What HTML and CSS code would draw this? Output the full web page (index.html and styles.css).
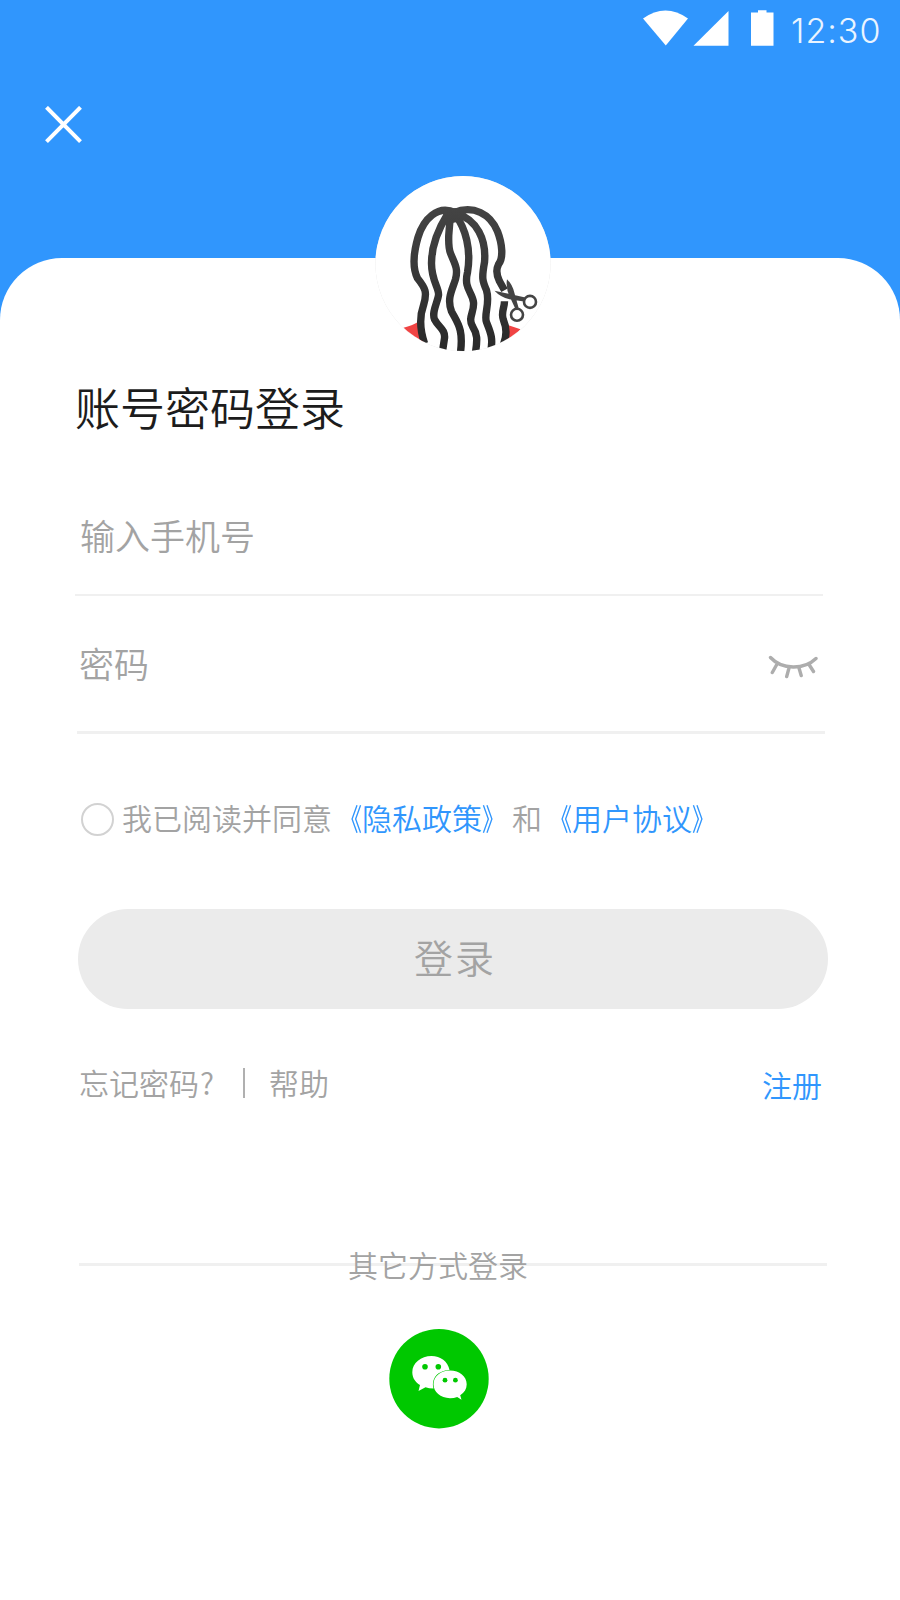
FILE: index.html
```
<!DOCTYPE html>
<html lang="zh-CN">
<head>
<meta charset="utf-8">
<title>账号密码登录</title>
<link rel="stylesheet" href="styles.css">
</head>
<body>
<main class="screen">
  <header class="header">
    <div class="status">
      <svg class="status-icons" width="134" height="36" viewBox="0 0 134 36">
        <path fill="#fff" d="M0 8.500Q22.500-7.500 45 8.500L22.800 35.500Z"/>
        <path fill="#fff" d="M85.500 1V35.700H50.500Z"/>
        <path fill="#fff" d="M108 2.500h7V0.300h8.500V2.500h7V35.700H108Z"/>
      </svg>
      <span class="time">12:30</span>
    </div>
    <svg class="close" width="38" height="38" viewBox="0 0 38 38">
      <path d="M1.500 1.300 35.500 35.700M35.500 1.300 1.500 35.700" stroke="#fff" stroke-width="4"/>
    </svg>
  </header>

  <section class="card">
    <svg class="avatar" width="176" height="176" viewBox="374.500 175.700 176 176">
      <defs>
        <clipPath id="round"><circle cx="462.500" cy="263.400" r="87.400"/></clipPath>
        <linearGradient id="hair" gradientUnits="userSpaceOnUse" x1="0" y1="206" x2="0" y2="350"><stop offset="0" stop-color="#444"/><stop offset="1" stop-color="#292929"/></linearGradient>
      </defs>
      <circle cx="462.500" cy="263.400" r="87.600" fill="#fff"/>
      <g clip-path="url(#round)">
        <path fill="#f04444" d="M403 327.500Q412 325 417 322L424 345H410ZM508 325 520 329 505 345Z"/>
        <g fill="none" stroke="url(#hair)" stroke-width="7.400" stroke-linejoin="round">
          <path d="M455 212.500C437 204 423 219 417.500 237C412 256 413 270 417 278C425 288 427 292 423 305C419 316 419 328 424 343"/>
          <path d="M447 214C437 230 431 247 431 263C431 281 439 288 438 295C437 302 431 312 434 319C438 327 445 329 444 338L442 351"/>
          <path d="M451 212C448 227 447 245 450 253C454 263 458 268 455 279C452 289 446 298 451 311C457 323 463 328 460 352"/>
          <path d="M455 215C465 228 471 249 467 272C463 288 472 292 473 302C474 312 467 317 472 326C477 334 477 339 475 352"/>
          <path d="M455 213C477 219 486 240 484 262C481 278 482 281 486 290C490 303 483 314 486 322C490 332 493 338 490 352"/>
          <path d="M453 212.500C473 204 490 214 497 231C502 244 503 258 498 264C495 270 496 275 499 281L504 290"/>
          <path d="M504 301C504 308 500 312 503 320C506 327 507 334 503 344"/>
        </g>
        <path fill="url(#hair)" d="M441 210Q454 206 468 209L461 219Q453 226 445 219Z"/>
      </g>
      <path fill="#444" d="M494 290.500 526 297.500 525 301.500 509 299Q500 297 494 290.500ZM506.500 279Q512 284 514 293L518.500 309 515.500 310 509.500 297Q505 288 506.500 279Z"/>
      <g fill="#fff" stroke="#444" stroke-width="2.600"><circle cx="529.500" cy="301.600" r="6"/><circle cx="516.500" cy="314.500" r="6"/></g>
    </svg>

    <h1 class="title">账号密码登录</h1>

    <div class="field phone"><span>输入手机号</span></div>
    <div class="field password">
      <span>密码</span>
      <svg class="eye" width="50" height="25" viewBox="0 0 50 25">
        <path d="M2.500 2.500C14 15 36 15 48 3.500M8.500 10 4.300 17.500M21 13 18.700 21.500M31 13 33.200 20.500M41 9.500 45.500 16.500" fill="none" stroke="#adadad" stroke-width="3.400" stroke-linecap="round"/>
      </svg>
    </div>

    <div class="agreement">
      <span class="radio"></span>
      <span class="terms">我已阅读并同意<a><i class="open">《</i>隐私政策<i class="shut">》</i></a>和<a><i class="open">《</i>用户协议<i class="shut">》</i></a></span>
    </div>

    <button class="submit">登录</button>

    <nav class="links">
      <a>忘记密码<span class="mark">?</span></a><span class="bar"></span><a>帮助</a><a class="register">注册</a>
    </nav>

    <div class="other"><span>其它方式登录</span></div>

    <svg class="wechat" width="100" height="100" viewBox="0 0 100 100">
      <circle cx="50" cy="49.700" r="49.700" fill="#00c800"/>
      <path fill="#fff" d="M42.500 27C32 27 23.300 34 23.300 43.200C23.300 49 26.500 53.300 31 56L29.500 62L36.500 58.300Q40 59.500 44.500 59.500C42 49 49 41.500 60.500 41C59 32.500 51.500 27 42.500 27Z"/>
      <path fill="#fff" d="M61 41.500C51.500 41.500 44.500 47.500 44.500 55.300C44.500 63 51.500 69.200 61 69.200Q65 69.200 68.200 68L72.500 70.800L71.200 66.200C75.500 63.500 77.700 60 77.700 55.300C77.700 47.500 70.500 41.500 61 41.500Z"/>
      <g fill="#00c800"><circle cx="36" cy="37.800" r="2.800"/><circle cx="49.300" cy="37.800" r="2.800"/><circle cx="56" cy="51.200" r="2.400"/><circle cx="66.400" cy="51.200" r="2.400"/></g>
    </svg>
  </section>
</main>
</body>
</html>
```
FILE: styles.css
```
* { box-sizing: border-box; }
body { margin: 0; font-family: "Noto Sans CJK SC", sans-serif; font-weight: 350; color: #a3a3a3; }
.screen { width: 900px; height: 1600px; background: linear-gradient(#3096fd 400px, #fff 400px); overflow: hidden; }
.header { height: 258px; }
.status { height: 60px; display: flex; justify-content: flex-end; padding: 10px 19px 0 0; }
.time { width: 90px; margin-left: 14px; font: 300 34px/42px Inter, sans-serif; letter-spacing: 1px; color: #eaf4ff; white-space: nowrap; }
.close { display: block; margin: 46px 0 0 45px; }
.card { position: relative; height: 1342px; padding: 118px 72px 0 75px; background: #fff; border-radius: 62px 62px 0 0; }
.avatar { position: absolute; left: 375px; top: -82px; filter: drop-shadow(0 0 0.500px #ddd); }
.title { margin: 0 0 36px; font-size: 45px; line-height: 62px; font-weight: 350; color: #1c1c1c; }
.field { width: 748px; display: flex; align-items: center; justify-content: space-between; font-size: 35px; line-height: 50px; }
.phone { height: 122px; padding: 2px 0 0 5px; border-bottom: 2px solid #f0f0f0; }
.password { height: 138px; margin-left: 2px; padding: 0 7px 2px 2px; border-bottom: 3px solid #f0f0f0; }
.eye { margin-top: 10px; }
.agreement { height: 44px; margin-top: 63px; display: flex; align-items: center; font-size: 30px; line-height: 44px; white-space: nowrap; }
.terms { margin-top: -4px; }
.agreement a, .links .register { color: #3096fd; }
.open, .shut { display: inline-block; font-style: normal; font-weight: 400; transform: scaleX(0.75); }
.open { transform-origin: right center; }
.shut { transform-origin: left center; }
.radio { width: 33px; height: 33px; margin: 0 8px 0 6px; border: 2px solid #d2d2d2; border-radius: 50%; }
.submit { display: block; width: 750px; height: 100px; margin: 68px 0 0 3px; padding: 0 0 7px 4px; border: 0; border-radius: 50px; background: #ebebeb; color: #a3a3a3; font: 350 39px/56px "Noto Sans CJK SC", sans-serif; letter-spacing: 2px; }
.links { display: flex; align-items: center; height: 44px; margin: 51px 6px 0 4px; font-size: 30px; line-height: 44px; }
.mark { margin-left: 1px; }
.bar { width: 2px; height: 30px; margin: 2px 24px 0 29px; background: #b0b0b0; }
.links .register { margin: 4px 0 0 auto; }
.other { width: 748px; height: 44px; margin: 139px 0 0 4px; padding-left: 269px; font-size: 30px; line-height: 43px; background: linear-gradient(#f0f0f0, #f0f0f0) 0 20px / 100% 3px no-repeat; }
.wechat { display: block; margin: 42px 0 0 314px; }
```
